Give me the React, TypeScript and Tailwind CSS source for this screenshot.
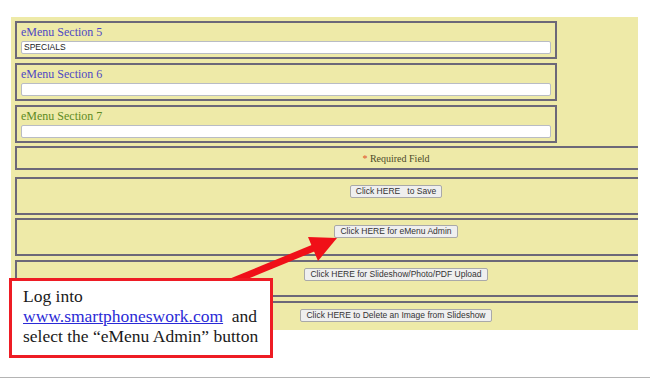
import React from 'react';

const serif = { fontFamily: '"Liberation Serif", "Times New Roman", serif' };
const sans = { fontFamily: '"Liberation Sans", Arial, sans-serif' };

type Section = { label: string; value: string; color: string };

const sections: Section[] = [
  { label: 'eMenu Section 5', value: 'SPECIALS', color: 'text-[#4f48c4]' },
  { label: 'eMenu Section 6', value: '', color: 'text-[#4f48c4]' },
  { label: 'eMenu Section 7', value: '', color: 'text-[#5f8a24]' },
];

function SectionBox({ s, mt }: { s: Section; mt: string }) {
  return (
    <div className={`${mt} shrink-0 w-[542px] h-[38px] border-2 border-[#6c6878] px-[4px] pt-[3px]`}>
      <div className={`text-[12px] leading-[13px] ${s.color}`} style={serif}>
        {s.label}
      </div>
      <div
        className="mt-[2px] w-[530px] h-[13px] bg-white border border-[#b9bcc4] rounded-[2px] px-[2px] text-[8.5px] leading-[11px] text-[#222]"
        style={sans}
      >
        {s.value}
      </div>
    </div>
  );
}

function ButtonRow({ label, mt, h, pt }: { label: string; mt: string; h: string; pt: string }) {
  return (
    <div className={`${mt} ${h} ${pt} w-[760px] shrink-0 border-y-2 border-l-2 border-[#6c6878] flex justify-center items-start`}>
      <div
        className="h-[13px] px-[5px] bg-[#efefef] border border-[#a9a9a9] rounded-[2px] text-[8.5px] leading-[11px] text-[#333] whitespace-pre"
        style={sans}
      >
        {label}
      </div>
    </div>
  );
}

export default function App() {
  return (
    <div className="relative w-[650px] h-[380px] bg-white overflow-hidden">
      <div className="pt-[17px] pl-[11px]">
        <div className="w-[627px] h-[313px] bg-[#eeeaa8] overflow-hidden pl-[4px] pt-[4px] flex flex-col">
          {sections.map((s, i) => (
            <SectionBox key={s.label} s={s} mt={i === 0 ? 'mt-0' : 'mt-[4px]'} />
          ))}
          <div className="mt-[3px] h-[24px] w-[760px] shrink-0 border-y-2 border-l-2 border-[#6c6878] flex items-center justify-center">
            <span className="text-[10px] text-[#4d4a2a]" style={serif}>
              <span className="text-[#e0532a]">*</span> Required Field
            </span>
          </div>
          <ButtonRow label="Click HERE   to Save" mt="mt-[7px]" h="h-[38px]" pt="pt-[6px]" />
          <ButtonRow label="Click HERE for eMenu Admin" mt="mt-[3px]" h="h-[38px]" pt="pt-[5px]" />
          <ButtonRow label="Click HERE for Slideshow/Photo/PDF Upload" mt="mt-[4px]" h="h-[37px]" pt="pt-[6px]" />
          <ButtonRow label="Click HERE to Delete an Image from Slideshow" mt="mt-[4px]" h="h-[40px]" pt="pt-[6px]" />
        </div>
      </div>

      <div className="mt-[47px] h-px bg-[#b4b4b4]" />

      {/* callout arrow */}
      <svg className="absolute left-0 top-0 pointer-events-none" width="650" height="380" viewBox="0 0 650 380">
        <line x1="226" y1="284" x2="316" y2="247" stroke="#f01018" strokeWidth="7" />
        <polygon points="337,238 308,237 318,261" fill="#f01018" />
      </svg>

      {/* callout box */}
      <div className="absolute left-[9px] top-[278px] w-[264px] h-[80px] bg-white border-[3px] border-[#ee1c24] pl-[11px] pt-[5px]">
        <div className="text-[17.5px] leading-[20px] text-[#1a1a1a]" style={serif}>
          <div>Log into</div>
          <div>
            <span className="text-[#2a2ad6] underline">www.smartphoneswork.com</span>
            <span>&nbsp; and</span>
          </div>
          <div>select the “eMenu Admin” button</div>
        </div>
      </div>
    </div>
  );
}
